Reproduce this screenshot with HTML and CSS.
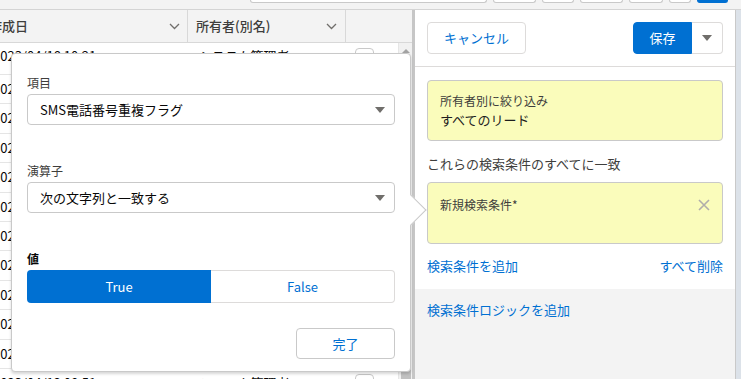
FILE: index.html
```html
<!DOCTYPE html>
<html lang="ja">

<head>
    <meta charset="UTF-8">
    <meta name="viewport" content="width=device-width, initial-scale=1.0">
    <title>リストビューの検索条件</title>

    <link rel="stylesheet" href="styles.css">
</head>

<body>

    <div class="topbar">
        <span class="stub"></span>
        <span class="stub"></span>
        <span class="stub"></span>
        <span class="stub"></span>
        <span class="stub"></span>
        <span class="stub"></span>
        <span class="stub stub-brand"></span>
    </div>

    <div class="main">
        <div class="list">
            <div class="list-head">
                <div class="col col-date">作成日
                    <svg class="chev" width="11" height="7" viewBox="0 0 11 7"><path d="M1 1l4.5 4.5L10 1" fill="none" stroke="#706e6b" stroke-width="1.3"/></svg>
                </div>
                <div class="col col-owner">所有者(別名)
                    <svg class="chev" width="11" height="7" viewBox="0 0 11 7"><path d="M1 1l4.5 4.5L10 1" fill="none" stroke="#706e6b" stroke-width="1.3"/></svg>
                </div>
                <div class="col col-rest"></div>
            </div>

            <div class="list-body">
                <div class="rows">
                    <div class="row"><span class="cell-date">2023/04/18 10:21</span><span class="cell-owner">システム管理者</span><span class="row-menu"></span></div>
                    <div class="row"><span class="cell-date">2023/04/18 10:19</span><span class="cell-owner">システム管理者</span><span class="row-menu"></span></div>
                    <div class="row"><span class="cell-date">2023/04/17 18:02</span><span class="cell-owner">システム管理者</span><span class="row-menu"></span></div>
                    <div class="row"><span class="cell-date">2023/04/17 17:45</span><span class="cell-owner">システム管理者</span><span class="row-menu"></span></div>
                    <div class="row"><span class="cell-date">2023/04/17 16:30</span><span class="cell-owner">システム管理者</span><span class="row-menu"></span></div>
                    <div class="row"><span class="cell-date">2023/04/16 11:12</span><span class="cell-owner">システム管理者</span><span class="row-menu"></span></div>
                    <div class="row"><span class="cell-date">2023/04/15 09:58</span><span class="cell-owner">システム管理者</span><span class="row-menu"></span></div>
                    <div class="row"><span class="cell-date">2023/04/14 15:27</span><span class="cell-owner">システム管理者</span><span class="row-menu"></span></div>
                    <div class="row"><span class="cell-date">2023/04/14 13:03</span><span class="cell-owner">システム管理者</span><span class="row-menu"></span></div>
                    <div class="row"><span class="cell-date">2023/04/13 10:40</span><span class="cell-owner">システム管理者</span><span class="row-menu"></span></div>
                    <div class="row"><span class="cell-date">2023/04/12 14:16</span><span class="cell-owner">システム管理者</span><span class="row-menu"></span></div>
                    <div class="row"><span class="cell-date">2023/04/12 08:51</span><span class="cell-owner">システム管理者</span><span class="row-menu"></span></div>
                </div>
                <div class="scrollbar">
                    <span class="scroll-up"></span>
                    <span class="scroll-thumb"></span>
                </div>
            </div>
        </div>

        <div class="panel">
            <div class="panel-head">
                <button class="btn btn-neutral">キャンセル</button>
                <div class="btn-group">
                    <button class="btn btn-brand">保存</button>
                    <button class="btn btn-icon">
                        <svg width="10" height="6" viewBox="0 0 10 6"><path d="M0 0h10L5 6z" fill="#706e6b"/></svg>
                    </button>
                </div>
            </div>

            <div class="panel-body">
                <div class="filter-card">
                    <div class="filter-title">所有者別に絞り込み</div>
                    <div class="filter-value">すべてのリード</div>
                </div>

                <div class="match-label">これらの検索条件のすべてに一致</div>

                <div class="filter-card filter-new">
                    <div class="filter-title">新規検索条件*</div>
                    <svg class="remove" width="12" height="12" viewBox="0 0 12 12"><path d="M1 1l10 10M11 1L1 11" stroke="#b0adab" stroke-width="1.6"/></svg>
                </div>

                <div class="filter-links">
                    <a href="#">検索条件を追加</a>
                    <a href="#">すべて削除</a>
                </div>
            </div>

            <div class="panel-foot">
                <a href="#">検索条件ロジックを追加</a>
            </div>
        </div>

        <div class="edge"></div>
    </div>

    <!-- 検索条件の編集ポップオーバー -->
    <div class="popover">
        <div class="field">
            <div class="field-label">項目</div>
            <div class="select">
                <span>SMS電話番号重複フラグ</span>
                <svg width="10" height="6" viewBox="0 0 10 6"><path d="M0 0h10L5 6z" fill="#706e6b"/></svg>
            </div>
        </div>

        <div class="field">
            <div class="field-label">演算子</div>
            <div class="select">
                <span>次の文字列と一致する</span>
                <svg width="10" height="6" viewBox="0 0 10 6"><path d="M0 0h10L5 6z" fill="#706e6b"/></svg>
            </div>
        </div>

        <div class="field">
            <div class="field-label field-label-strong">値</div>
            <div class="toggle">
                <span class="seg seg-on">True</span>
                <span class="seg seg-off">False</span>
            </div>
        </div>

        <button class="btn btn-done">完了</button>
    </div>

</body>
</html>
```

FILE: styles.css
```css
* {
    box-sizing: border-box;
}

html,
body {
    height: 100%;
}

body {
    margin: 0;
    position: relative;
    display: flex;
    flex-direction: column;
    overflow: hidden;
    font-family: "Noto Sans CJK JP", "Noto Sans", sans-serif;
    font-size: 13px;
    color: #080707;
    background-color: #f3f3f3;
}

/* top strip with the bottoms of the page buttons */
.topbar {
    height: 10px;
    flex-shrink: 0;
    display: flex;
    gap: 6px;
    padding-left: 250px;
    background-color: #f3f3f3;
    border-bottom: 1px solid #d4d4d4;
}

.stub {
    height: 3px;
    background-color: #fff;
    border: 1px solid #c9c9c9;
    border-top: 0;
    border-radius: 0 0 3px 3px;
}

.stub:nth-child(1) { width: 237px; }
.stub:nth-child(2) { width: 43px; }
.stub:nth-child(3) { width: 32px; }
.stub:nth-child(4) { width: 43px; }
.stub:nth-child(5) { width: 34px; }
.stub:nth-child(6) { width: 22px; }

.stub-brand {
    width: 31px;
    background-color: #0070d2;
    border-color: #0070d2;
}

.main {
    flex: 1;
    display: flex;
    min-height: 0;
}

/* list view behind the popover */
.list {
    width: 412px;
    flex-shrink: 0;
    display: flex;
    flex-direction: column;
    overflow: hidden;
    background-color: #fff;
}

.list-head {
    height: 33px;
    flex-shrink: 0;
    display: flex;
    background-color: #f3f3f3;
    border-bottom: 1px solid #d8d8d8;
    color: #3e3e3c;
    font-weight: 500;
}

.col {
    display: flex;
    align-items: center;
    justify-content: space-between;
    line-height: 32px;
    border-right: 1px solid #d8d8d8;
}

.col-date {
    width: 199px;
    margin-left: -11px;
    padding-right: 7px;
}

.col-owner {
    width: 158px;
    padding: 0 8px;
}

.col-rest {
    flex: 1;
    border-right: 0;
}

.list-body {
    flex: 1;
    display: flex;
    min-height: 0;
}

.rows {
    flex: 1;
    overflow: hidden;
}

.row {
    display: flex;
    height: 29.4px;
    line-height: 28px;
    border-bottom: 1px solid #e5e5e5;
    white-space: nowrap;
}

.row:first-child {
    height: 32px;
    line-height: 26px;
}

.cell-date {
    width: 199px;
    flex-shrink: 0;
    margin-left: -11px;
    padding-left: 4px;
}

.cell-owner {
    width: 167px;
    flex-shrink: 0;
    padding-left: 11px;
}

.row-menu {
    width: 19px;
    height: 19px;
    margin-top: 5px;
    background-color: #fff;
    border: 1px solid #c9c9c9;
    border-radius: 4px;
}

.scrollbar {
    width: 14px;
    display: flex;
    flex-direction: column;
    align-items: center;
    background-color: #f1f1f1;
    border-left: 1px solid #e6e6e6;
}

.scroll-up {
    margin-top: 6px;
    border-left: 4px solid transparent;
    border-right: 4px solid transparent;
    border-bottom: 4px solid #a3a3a3;
}

.scroll-thumb {
    width: 10px;
    height: 60px;
    margin-top: auto;
    background-color: #c1c1c1;
}

/* filter panel */
.panel {
    width: 324px;
    flex-shrink: 0;
    display: flex;
    flex-direction: column;
    background-color: #fff;
    border-left: 3px solid #c6c6c6;
    border-right: 1px solid #c9c9c9;
}

.panel-head {
    display: flex;
    justify-content: space-between;
    padding: 12px;
    border-bottom: 1px solid #dddbda;
}

.btn {
    height: 32px;
    padding: 0;
    font-family: inherit;
    font-size: 13px;
    line-height: 30px;
    background-color: #fff;
    border: 1px solid #dddbda;
    border-radius: 4px;
    color: #0070d2;
    cursor: pointer;
}

.btn-neutral {
    width: 99px;
}

.btn-group {
    display: flex;
}

.btn-brand {
    width: 59px;
    color: #fff;
    background-color: #0070d2;
    border-color: #0070d2;
    border-radius: 4px 0 0 4px;
}

.btn-icon {
    width: 31px;
    display: flex;
    align-items: center;
    justify-content: center;
    border-left: 0;
    border-radius: 0 4px 4px 0;
}

.panel-body {
    padding: 13px 12px;
}

.filter-card {
    padding: 11px 12px 10px;
    background-color: #fafcbb;
    border: 1px solid #c9c9c9;
    border-radius: 4px;
}

.filter-title {
    font-size: 12px;
    line-height: 18px;
    color: #3e3e3c;
}

.filter-value {
    line-height: 20px;
    color: #1e1e1e;
}

.match-label {
    margin-top: 13px;
    line-height: 20px;
    color: #3e3e3c;
}

.filter-new {
    height: 62px;
    margin-top: 8px;
    padding-top: 13px;
    display: flex;
    justify-content: space-between;
    align-items: flex-start;
}

.remove {
    margin-top: 3px;
}

.filter-links {
    display: flex;
    justify-content: space-between;
    margin-top: 12px;
    line-height: 20px;
}

a {
    color: #0070d2;
    text-decoration: none;
}

.panel-foot {
    flex: 1;
    padding: 11px 12px;
    line-height: 20px;
    background-color: #f3f3f3;
}

.edge {
    flex: 1;
    background-color: #dce2e9;
}

/* popover */
.popover {
    position: absolute;
    left: 11px;
    top: 53px;
    width: 400px;
    height: 319px;
    display: flex;
    flex-direction: column;
    padding: 20px 15px 12px;
    background-color: #fff;
    border: 1px solid #c9c9c9;
    border-radius: 4px;
    box-shadow: 0 2px 3px rgba(0, 0, 0, 0.16);
}

.popover::after {
    content: "";
    position: absolute;
    left: 388px;
    top: 145px;
    width: 21px;
    height: 21px;
    background-color: #fff;
    border-top: 1px solid #c9c9c9;
    border-right: 1px solid #c9c9c9;
    transform: rotate(45deg);
}

.field + .field {
    margin-top: 37px;
}

.field-label {
    margin-bottom: 2px;
    font-size: 12px;
    line-height: 18px;
    color: #3e3e3c;
}

.field-label-strong {
    font-weight: bold;
    color: #080707;
}

.select {
    height: 31px;
    display: flex;
    align-items: center;
    justify-content: space-between;
    padding: 0 9px 0 12px;
    border: 1px solid #c9c9c9;
    border-radius: 4px;
}

.toggle {
    display: flex;
    height: 33px;
}

.seg {
    width: 50%;
    text-align: center;
    line-height: 33px;
}

.seg-on {
    color: #fff;
    background-color: #0070d2;
    border-radius: 4px 0 0 4px;
}

.seg-off {
    color: #0070d2;
    line-height: 31px;
    border: 1px solid #dddbda;
    border-left: 0;
    border-radius: 0 4px 4px 0;
}

.btn-done {
    width: 99px;
    height: 31px;
    margin-top: auto;
    align-self: flex-end;
    line-height: 29px;
    border-color: #c9c9c9;
}
```
